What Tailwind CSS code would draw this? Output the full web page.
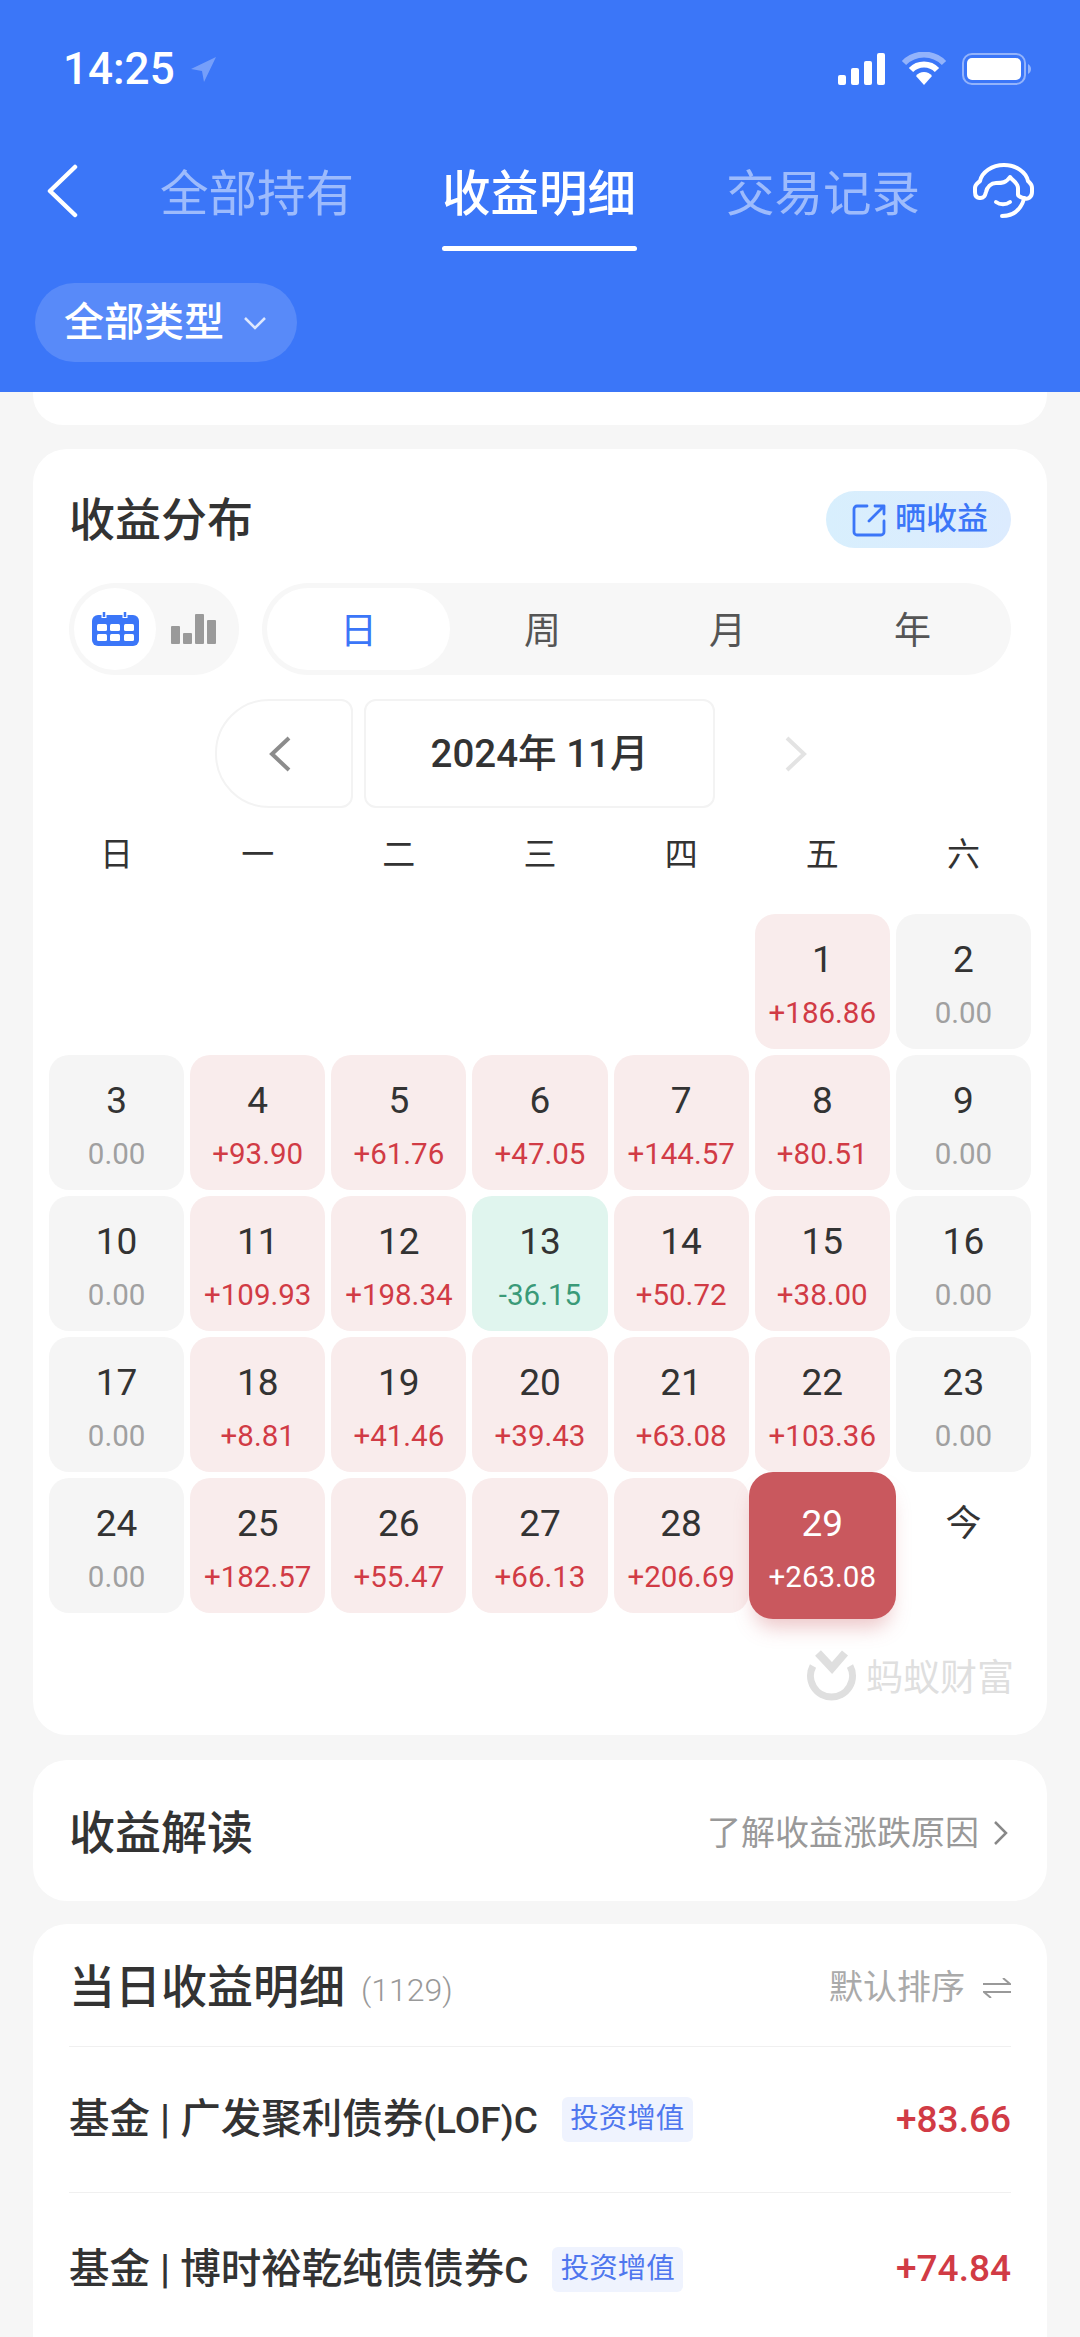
<!DOCTYPE html>
<html lang="zh-CN">
<head>
  <meta charset="UTF-8" />
  <title>收益明细</title>
  <script src="https://cdn.jsdelivr.net/npm/@tailwindcss/browser@4"></script>
</head>
<body class="bg-[#f6f6f6] font-['Roboto','Noto_Sans_CJK_SC',sans-serif] text-[#333333] overflow-hidden h-[2337px]">
  <!-- blue header -->
  <header class="h-[392px] bg-[#3b76f8] text-white flex flex-col">
    <div class="h-[136px] pl-[63px] pr-[49px] flex justify-between items-center pt-[1px]">
      <div class="flex items-center gap-[14px]">
        <span class="text-[44px] leading-none font-medium">14:25</span>
        <svg class="w-[28px] h-[28px]" viewBox="0 0 28 28"><path d="M27 2 2 14l11 2 2 11z" fill="#ffffff" fill-opacity=".3"/></svg>
      </div>
      <div class="flex items-center gap-[15px]">
        <svg class="w-[48px] h-[32px]" viewBox="0 0 48 32" fill="#ffffff"><rect x="0" y="22" width="8" height="10" rx="2"/><rect x="13" y="15" width="8" height="17" rx="2"/><rect x="26" y="8" width="8" height="24" rx="2"/><rect x="39" y="0" width="8" height="32" rx="2"/></svg>
        <svg class="w-[46px] h-[34px]" viewBox="0 0 46 34" fill="none"><path d="M3 11a28 28 0 0 1 40 0" stroke="#ffffff" stroke-opacity=".45" stroke-width="6"/><path d="M10 18a18 18 0 0 1 26 0" stroke="#ffffff" stroke-width="6"/><path d="M15 24a10 10 0 0 1 16 0l-8 9z" fill="#ffffff"/></svg>
        <svg class="w-[69px] h-[32px]" viewBox="0 0 69 32" fill="none"><rect x="1" y="1" width="62" height="30" rx="9" stroke="#ffffff" stroke-opacity=".45" stroke-width="2"/><rect x="5" y="5" width="54" height="22" rx="5" fill="#ffffff"/><path d="M66 11c2 1 3 3 3 5s-1 4-3 5z" fill="#ffffff" fill-opacity=".45"/></svg>
      </div>
    </div>
    <nav class="h-[147px] relative flex items-start pt-[29px]">
      <svg class="absolute left-[45px] top-[28px] w-[34px] h-[54px]" viewBox="0 0 34 54" fill="none"><path d="M30 3 5 27l25 24" stroke="#ffffff" stroke-width="4.5" stroke-linecap="round" stroke-linejoin="round"/></svg>
      <div class="ml-[160px] text-[48.5px] leading-[60px] text-white/50 w-[195px] whitespace-nowrap">全部持有</div>
      <div class="ml-[87px] w-[195px] text-[48.5px] leading-[60px] font-medium whitespace-nowrap relative">收益明细
        <div class="absolute left-0 right-0 top-[81px] h-[5px] bg-white rounded-full"></div>
      </div>
      <div class="ml-[89px] text-[48.5px] leading-[60px] text-white/50 whitespace-nowrap">交易记录</div>
      <svg class="absolute left-[960px] top-[14px] w-[90px] h-[80px]" viewBox="0 0 90 80" fill="none" stroke="#ffffff" stroke-width="4" stroke-linecap="round" stroke-linejoin="round"><path d="M20 48c-4 0-5-3-5-6v-4c0-4 3-5 5-7 2-9 12-16 24-16s22 7 24 16c2 2 4 3 4 7v4c0 5-4 8-8 6"/><path d="M20 48c4 0 5-2 6-6 1-5 5-9 10-9 6 0 10 0 14-6 3 4 8 6 8 11v7c0 1 4 3 6 3"/><path d="M36 52c4 3 10 3 14 0"/><path d="M42 66c10 0 18-4 22-17"/></svg>
    </nav>
    <div class="pl-[35px]">
      <div class="w-[262px] h-[79px] rounded-[40px] bg-white/15 flex items-center pl-[29px]">
        <span class="text-[40px] leading-none font-medium whitespace-nowrap">全部类型</span>
        <svg class="ml-[19px] w-[24px] h-[16px]" viewBox="0 0 24 16" fill="none"><path d="m2 3 10 10L22 3" stroke="#ffffff" stroke-opacity=".8" stroke-width="2.5"/></svg>
      </div>
    </div>
  </header>

  <main class="px-[33px] flex flex-col">
    <div class="h-[33px] bg-white rounded-b-[30px]"></div>

    <!-- calendar card -->
    <section class="mt-[24px] h-[1286px] bg-white rounded-[34px] relative">
      <div class="flex justify-between items-center pl-[36px] pr-[36px] pt-[42px]">
        <h2 class="text-[46px] leading-[56px] font-medium">收益分布</h2>
        <div class="w-[185px] h-[57px] rounded-full bg-gradient-to-r from-[#d8effd] to-[#dcebfe] flex items-center pl-[26px] text-[#3b76f8] text-[31px] font-medium">
          <svg class="w-[34px] h-[34px] mr-[9px] shrink-0" viewBox="0 0 34 34" fill="none" stroke="#3b76f8" stroke-width="2.8" stroke-linecap="round" stroke-linejoin="round"><path d="M15 3H5a3 3 0 0 0-3 3v23a3 3 0 0 0 3 3h24a3 3 0 0 0 3-3V18"/><path d="M17 18 32 3m-9 0h9v8"/></svg>
          <span class="whitespace-nowrap">晒收益</span>
        </div>
      </div>

      <div class="flex gap-[23px] pl-[36px] mt-[35px]">
        <div class="w-[170px] h-[92px] rounded-full bg-[#f7f7f7] p-[5px] flex items-center">
          <div class="w-[82px] h-[82px] rounded-full bg-white flex items-center justify-center">
            <svg class="w-[47px] h-[34px]" viewBox="0 0 47 34"><rect x="0" y="3" width="47" height="31" rx="6" fill="#3b76f8"/><path d="M12 0v6M33 0v6" stroke="#ffffff" stroke-width="5"/><path d="M12 0v5M33 0v5" stroke="#3b76f8" stroke-width="2.5"/><g fill="#ffffff"><rect x="5" y="12" width="10" height="7" rx="1.5"/><rect x="18" y="12" width="10" height="7" rx="1.5"/><rect x="32" y="12" width="10" height="7" rx="1.5"/><rect x="5" y="22" width="10" height="7" rx="1.5"/><rect x="18" y="22" width="10" height="7" rx="1.5"/><rect x="32" y="22" width="10" height="7" rx="1.5"/></g></svg>
          </div>
          <svg class="ml-[15px] w-[45px] h-[30px]" viewBox="0 0 45 30" fill="#9a9a9a"><rect x="0" y="12" width="9" height="18" rx="1"/><rect x="12" y="19" width="9" height="11" rx="1"/><rect x="24" y="0" width="9" height="30" rx="1"/><rect x="36" y="6" width="9" height="24" rx="1"/></svg>
        </div>
        <div class="w-[749px] h-[92px] rounded-full bg-[#f7f7f7] p-[5px] flex items-center text-[37px] leading-[50px]">
          <div class="w-[183px] h-[82px] rounded-full bg-white flex items-center justify-center text-[#3b76f8] pt-[6px]">日</div>
          <div class="w-[185px] text-center text-[#555555] pt-[6px]">周</div>
          <div class="w-[185px] text-center text-[#555555] pt-[6px]">月</div>
          <div class="w-[185px] text-center text-[#555555] pt-[6px]">年</div>
        </div>
      </div>

      <div class="flex pl-[182px] mt-[24px] h-[109px] gap-[11px]">
        <div class="w-[138px] border-2 border-[#f3f3f3] rounded-l-[54px] rounded-r-[12px] flex items-center justify-center pr-[8px]">
          <svg class="w-[26px] h-[36px]" viewBox="0 0 26 36" fill="none"><path d="M22 2 5 18l17 16" stroke="#8c8c8c" stroke-width="4"/></svg>
        </div>
        <div class="w-[351px] border-2 border-[#f3f3f3] rounded-[12px] flex items-center justify-center text-[38.5px] font-medium whitespace-nowrap">2024年 11月</div>
        <div class="w-[140px] flex items-center justify-center">
          <svg class="w-[26px] h-[36px]" viewBox="0 0 26 36" fill="none"><path d="m4 2 17 16L4 34" stroke="#e3e3e3" stroke-width="4"/></svg>
        </div>
      </div>

      <div class="grid grid-cols-7 gap-[6px] ml-[16px] w-[982px] mt-[22px] text-[33px] leading-[50px] text-center text-[#333333]">
        <div>日</div><div>一</div><div>二</div><div>三</div><div>四</div><div>五</div><div>六</div>
      </div>

      <div id="calendar" class="grid grid-cols-7 auto-rows-[135px] gap-[6px] ml-[16px] w-[982px] mt-[34px]"></div>

      <div class="absolute left-[774px] top-[1199px] flex items-center gap-[9px] text-[37px] leading-none text-[#dfdfdf] whitespace-nowrap">
        <svg class="w-[50px] h-[58px]" viewBox="17 8 50 58" fill="none" stroke="#dfdfdf"><path d="M23 26a21 21 0 1 0 37 0" stroke-width="7"/><path d="M28 13l14 15 13-15" stroke-width="8"/></svg>
        <span class="mt-[2px]">蚂蚁财富</span>
      </div>
    </section>

    <!-- insight card -->
    <section class="mt-[25px] h-[141px] bg-white rounded-[34px] flex justify-between items-center pl-[36px] pr-[38px] pt-[5px]">
      <h2 class="text-[46px] font-medium">收益解读</h2>
      <div class="flex items-center text-[34px] text-[#999999] whitespace-nowrap">了解收益涨跌原因
        <svg class="ml-[14px] w-[16px] h-[26px]" viewBox="0 0 16 26" fill="none"><path d="m2 2 11 11L2 24" stroke="#888888" stroke-width="2.5"/></svg>
      </div>
    </section>

    <!-- detail card -->
    <section class="mt-[23px] bg-white rounded-t-[34px] px-[36px] h-[420px]">
      <div class="h-[123px] flex items-center justify-between border-b border-[#f0f0f0] pt-[5px]">
        <div class="flex items-center">
          <h2 class="text-[46px] font-medium">当日收益明细</h2>
          <span class="ml-[16px] text-[32px] text-[#999999] font-light mt-[4px]">(1129)</span>
        </div>
        <div class="flex items-center text-[34px] text-[#aaaaaa] whitespace-nowrap">默认排序
          <svg class="ml-[18px] w-[28px] h-[20px]" viewBox="0 0 28 20" fill="none" stroke="#999999" stroke-width="2"><path d="M0 6h27L20 0"/><path d="M28 14H1l7 6"/></svg>
        </div>
      </div>
      <div class="h-[146px] flex items-center justify-between border-b border-[#f0f0f0]">
        <div class="flex items-center">
          <span class="text-[40.5px] font-medium whitespace-nowrap">基金 | 广发聚利债券<span class="text-[37px]">(LOF)C</span></span>
          <span class="ml-[24px] h-[45px] w-[131px] rounded-[6px] bg-[#eff3fe] text-[#4f77ee] text-[28.5px] flex items-center justify-center whitespace-nowrap">投资增值</span>
        </div>
        <span class="text-[37px] font-medium text-[#d13b45]">+83.66</span>
      </div>
      <div class="h-[152px] flex items-center justify-between">
        <div class="flex items-center">
          <span class="text-[40.5px] font-medium whitespace-nowrap">基金 | 博时裕乾纯债债券<span class="text-[37px]">C</span></span>
          <span class="ml-[24px] h-[45px] w-[131px] rounded-[6px] bg-[#eff3fe] text-[#4f77ee] text-[28.5px] flex items-center justify-center whitespace-nowrap">投资增值</span>
        </div>
        <span class="text-[37px] font-medium text-[#d13b45]">+74.84</span>
      </div>
    </section>
  </main>

  <script>
    // [day, value]; the first of the month is a Friday
    const days = [
      [1, '+186.86'], [2, '0.00'], [3, '0.00'], [4, '+93.90'], [5, '+61.76'], [6, '+47.05'], [7, '+144.57'],
      [8, '+80.51'], [9, '0.00'], [10, '0.00'], [11, '+109.93'], [12, '+198.34'], [13, '-36.15'], [14, '+50.72'],
      [15, '+38.00'], [16, '0.00'], [17, '0.00'], [18, '+8.81'], [19, '+41.46'], [20, '+39.43'], [21, '+63.08'],
      [22, '+103.36'], [23, '0.00'], [24, '0.00'], [25, '+182.57'], [26, '+55.47'], [27, '+66.13'], [28, '+206.69'],
    ];
    const tones = {
      plus: 'bg-[#f9ecec] text-[#d13b45]',
      minus: 'bg-[#e0f5ee] text-[#3a9a78]',
      zero: 'bg-[#f5f5f5] text-[#a0a0a0]',
    };
    const cal = document.getElementById('calendar');
    let html = '<div class="col-span-5"></div>';
    days.forEach(([day, value]) => {
      const tone = value === '0.00' ? tones.zero : value[0] === '-' ? tones.minus : tones.plus;
      html += `<div class="rounded-[20px] ${tone} flex flex-col items-center">
        <div class="text-[37px] leading-[40px] mt-[26px] font-[450] text-[#333333]">${day}</div>
        <div class="text-[29.5px] leading-[34px] mt-[16px] font-[450]">${value}</div>
      </div>`;
    });
    html += `<div class="-m-[6px] rounded-[24px] bg-[#c9585e] text-white flex flex-col items-center shadow-[0_14px_20px_-6px_rgba(201,88,94,0.35)] z-10">
      <div class="text-[37px] leading-[40px] mt-[32px] font-[450]">29</div>
      <div class="text-[29.5px] leading-[34px] mt-[16px] font-[450]">+263.08</div>
    </div>`;
    html += '<div class="flex justify-center"><div class="text-[36px] leading-[40px] mt-[26px]">今</div></div>';
    cal.innerHTML = html;
  </script>
</body>
</html>
